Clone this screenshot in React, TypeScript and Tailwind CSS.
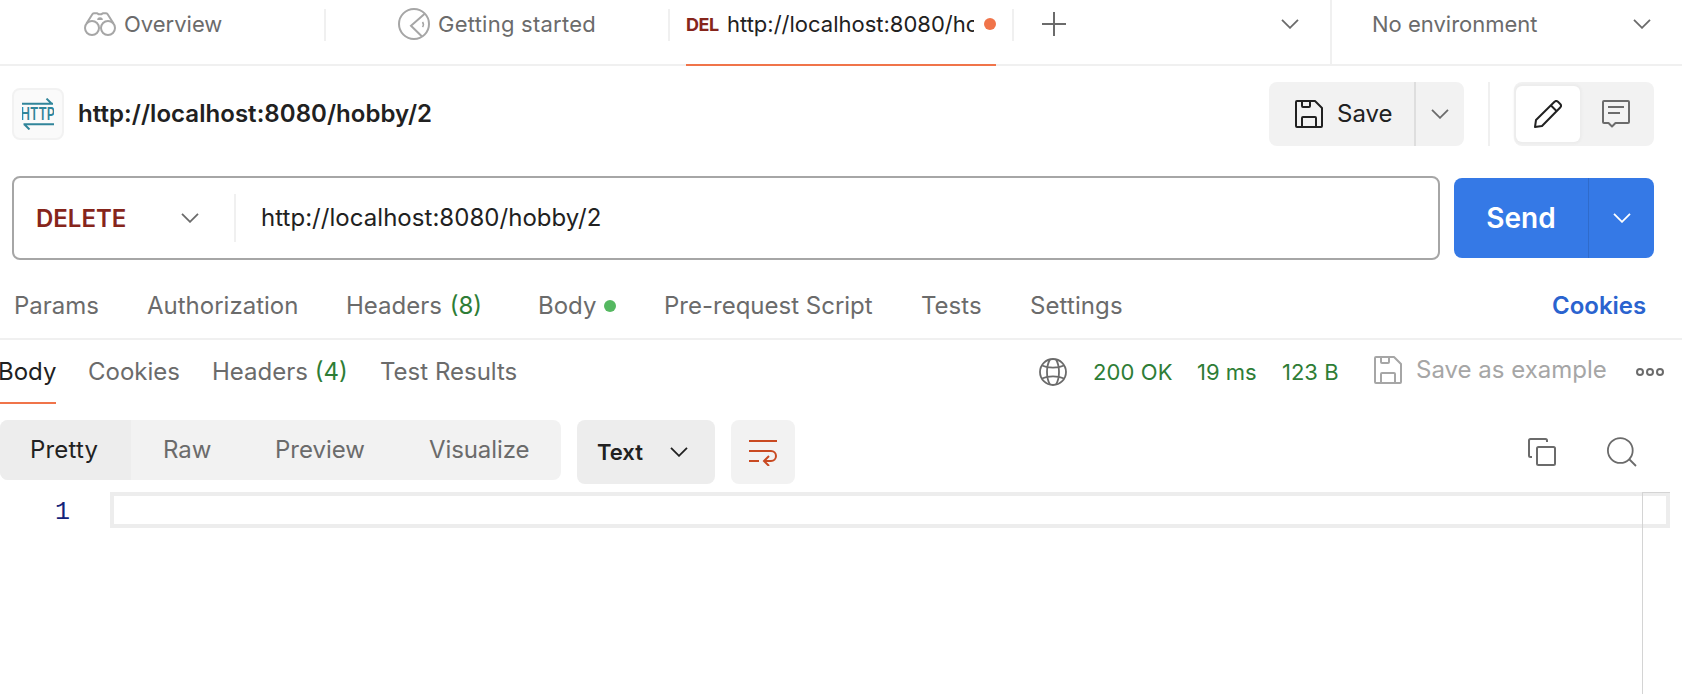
import type { ReactNode } from "react";

type IconProps = { className?: string };

function Chevron({ className = "" }: IconProps) {
  return (
    <svg className={`shrink-0 ${className}`} width="18" height="10" viewBox="0 0 18 10" fill="none" stroke="currentColor" strokeWidth="1.8">
      <path d="M1 .8 9 8.8l8-8" />
    </svg>
  );
}

function Binoculars() {
  return (
    <svg width="32" height="24" viewBox="0 0 32 24" fill="none" stroke="#a6a6a6" strokeWidth="2" className="shrink-0">
      <circle cx="8" cy="16" r="7" />
      <circle cx="24" cy="16" r="7" />
      <path d="M2.500 11.500 8.500 2Q9.100 1.200 10.200 1.200H13l1.500 1h3l1.500-1h2.800q1.100 0 1.700.8L29.500 11.500" />
      <path d="M13.200 8a2.800 2.800 0 0 1 5.600 0z" fill="#a6a6a6" stroke="none" />
    </svg>
  );
}

function StartedIcon() {
  return (
    <svg width="32" height="32" viewBox="0 0 32 32" fill="none" stroke="#a6a6a6" strokeWidth="2" className="shrink-0">
      <circle cx="16" cy="16" r="15" />
      <path d="M27 5.500 13 17.800 24 28.500" />
      <path d="M24.500 14q1.800 2.500 0 5" strokeWidth="1.600" />
    </svg>
  );
}

function HttpIcon() {
  return (
    <svg width="32" height="32" viewBox="0 0 32 32" fill="none" stroke="#31859a" strokeWidth="2" className="shrink-0">
      <path d="M0 5.800h31M24.500 .6l5.200 5.200" />
      <path d="M32 26.200H1.500M7.500 31.500l-5.200-5.200" />
      <text x="-1.500" y="22.400" textLength="34.500" lengthAdjust="spacingAndGlyphs" fontSize="17.500" fontWeight="600" fill="#31859a" stroke="none" fontFamily="Inter, sans-serif">HTTP</text>
    </svg>
  );
}

function Floppy() {
  return (
    <svg width="28" height="28" viewBox="0 0 28 28" fill="none" stroke="currentColor" strokeWidth="2" strokeLinejoin="round" className="shrink-0">
      <path d="M2 1h18l7 7v18a1 1 0 0 1-1 1H2a1 1 0 0 1-1-1V2a1 1 0 0 1 1-1z" />
      <path d="M7 1v5a1 1 0 0 0 1 1h6a1 1 0 0 0 1-1V1M7 27v-9a1 1 0 0 1 1-1h12a1 1 0 0 1 1 1v9" />
    </svg>
  );
}

function Pencil() {
  return (
    <svg width="28" height="28" viewBox="0 0 28 28" fill="none" stroke="#212121" strokeWidth="2" strokeLinejoin="round" className="shrink-0">
      <path d="M1 27l1-7L20.500 1.800a2.500 2.500 0 0 1 3.500 0l2.200 2.200a2.500 2.500 0 0 1 0 3.500L8 26z" />
      <path d="M17 5.500 22.500 11" />
    </svg>
  );
}

function Comment() {
  return (
    <svg width="28" height="28" viewBox="0 0 28 28" fill="none" stroke="#6b6b6b" strokeWidth="2" strokeLinejoin="round" className="shrink-0">
      <path d="M2 1h24a1 1 0 0 1 1 1v20a1 1 0 0 1-1 1H13.500L10 26.500 6.500 23H2a1 1 0 0 1-1-1V2a1 1 0 0 1 1-1zM6 7h16M6 13h12" />
    </svg>
  );
}

function Globe() {
  return (
    <svg width="28" height="28" viewBox="0 0 28 28" fill="none" stroke="#6b6b6b" strokeWidth="1.800" className="shrink-0">
      <circle cx="14" cy="14" r="13" />
      <path d="M11 1.500C7 8 7 20 11 26.500M17 1.500c4 6.500 4 18.500 0 25M3 7.500c6 2.800 16 2.800 22 0M3 20.500c6-2.800 16-2.800 22 0" />
    </svg>
  );
}

function Wrap() {
  return (
    <svg width="28" height="28" viewBox="0 0 28 28" fill="none" stroke="#c94a22" strokeWidth="2" className="shrink-0">
      <path d="M0 3h28M0 13h22a5 5 0 0 1 0 10h-6.500M0 23h10M20 18l-5 5 5 5" />
    </svg>
  );
}

function Copy() {
  return (
    <svg width="28" height="28" viewBox="0 0 28 28" fill="none" stroke="#6b6b6b" strokeWidth="2" className="shrink-0">
      <rect x="9" y="9" width="18" height="18" rx="1.500" />
      <path d="M4 19H2.500A1.500 1.500 0 0 1 1 17.500v-15A1.500 1.500 0 0 1 2.500 1h15A1.500 1.500 0 0 1 19 2.500V4" />
    </svg>
  );
}

function Search() {
  return (
    <svg width="30" height="30" viewBox="0 0 30 30" fill="none" stroke="#6b6b6b" strokeWidth="1.800" className="shrink-0">
      <circle cx="13.300" cy="13.500" r="12.400" />
      <path d="m22 22 7 7" />
    </svg>
  );
}

function More() {
  return (
    <svg width="28" height="10" viewBox="0 0 28 10" fill="none" stroke="#6b6b6b" strokeWidth="2" className="shrink-0">
      <circle cx="4" cy="5" r="3" />
      <circle cx="14" cy="5" r="3" />
      <circle cx="24" cy="5" r="3" />
    </svg>
  );
}

function Divider({ className = "" }: IconProps) {
  return <div className={`w-[2px] shrink-0 bg-[#f0f0f0] ${className}`} />;
}

function Slot({ className, children }: { className: string; children: ReactNode }) {
  return <div className={`shrink-0 ${className}`}>{children}</div>;
}

function TabBar() {
  return (
    <div className="flex h-[66px] shrink-0 border-b-2 border-[#f0f0f0] text-[22px]">
      <div className="flex h-12 w-[324px] items-center gap-2 pl-[84px]">
        <Binoculars />
        <span>Overview</span>
      </div>
      <Divider className="mt-[9px] h-8" />
      <div className="flex h-12 w-[342px] items-center gap-2 pl-[72px]">
        <StartedIcon />
        <span className="tracking-[0.25px]">Getting started</span>
      </div>
      <Divider className="mt-[9px] h-8" />
      <div className="ml-4 flex h-[66px] w-[310px] shrink-0 items-center border-b-2 border-[#f0744a] pb-4">
        <span className="w-[41px] shrink-0 pt-px text-[18px] font-bold tracking-[-0.5px] text-[#86251b]">DEL</span>
        <span className="w-[247px] shrink-0 overflow-hidden text-[#212121]">http://localhost:8080/hobby/2</span>
        <span className="ml-[10px] size-3 shrink-0 rounded-full bg-[#f0744a]" />
      </div>
      <Divider className="mt-[9px] ml-4 h-8" />
      <div className="flex h-12 flex-1 items-center justify-between pr-[31px] pl-7">
        <svg width="24" height="24" viewBox="0 0 24 24" stroke="#6b6b6b" strokeWidth="2">
          <path d="M12 0v24M0 12h24" />
        </svg>
        <Chevron />
      </div>
      <Divider className="h-16" />
      <div className="flex h-12 w-[350px] items-center justify-between pr-[31px] pl-10">
        <span>No environment</span>
        <Chevron />
      </div>
    </div>
  );
}

function RequestHeader() {
  return (
    <div className="mt-4 flex h-16 shrink-0 items-center pr-7 pl-3 text-[#212121]">
      <div className="flex size-[52px] items-center justify-center rounded-lg border-2 border-[#f2f2f2] bg-[#fafafa]">
        <HttpIcon />
      </div>
      <h1 className="ml-[14px] flex-1 font-semibold tracking-[0.05px]">http://localhost:8080/hobby/2</h1>
      <div className="flex h-16 w-[195px] rounded-lg bg-[#f2f2f2]">
        <button className="flex w-[147px] items-center gap-[14px] border-r-2 border-[#dedede] pl-[26px]">
          <Floppy />
          <span>Save</span>
        </button>
        <button className="flex flex-1 items-center justify-center text-[#6b6b6b]">
          <Chevron />
        </button>
      </div>
      <Divider className="ml-6 h-16" />
      <div className="ml-6 flex h-16 w-[140px] items-center rounded-lg bg-[#f2f2f2] px-[2px]">
        <div className="flex h-14 w-16 items-center justify-center rounded-md bg-white shadow-[0_0_2px_2px_#ececec]">
          <Pencil />
        </div>
        <div className="flex flex-1 items-center justify-center">
          <Comment />
        </div>
      </div>
    </div>
  );
}

function UrlBar() {
  return (
    <div className="mt-[30px] flex h-[84px] shrink-0 items-center pr-7 pl-3">
      <div className="flex h-[84px] w-[1428px] items-center rounded-lg border-2 border-[#a6a6a6] text-[#212121]">
        <span className="w-[145px] pt-[2px] pl-[22px] font-semibold text-[#86251b]">DELETE</span>
        <Chevron className="ml-[22px] text-[#6b6b6b]" />
        <Divider className="ml-[35px] h-12" />
        <span className="ml-[25px] tracking-[0.04px]">http://localhost:8080/hobby/2</span>
      </div>
      <div className="ml-[14px] flex h-20 w-[200px] rounded-lg bg-[#3579e6] text-white">
        <button className="flex w-[135px] items-center justify-center border-r border-[#2f6bcb] text-[28px] font-semibold">Send</button>
        <button className="flex flex-1 items-center justify-center">
          <Chevron />
        </button>
      </div>
    </div>
  );
}

function RequestTabs() {
  return (
    <div className="flex h-20 shrink-0 items-center border-b-2 border-[#f0f0f0] pt-[14px] pl-[14px]">
      <Slot className="w-[133px]">Params</Slot>
      <Slot className="w-[199px]">Authorization</Slot>
      <Slot className="w-[192px]">
        Headers <span className="ml-px text-[#2e7d36]">(8)</span>
      </Slot>
      <Slot className="flex w-[126px] items-center">
        <span className="w-[66px]">Body</span>
        <span className="size-3 rounded-full bg-[#55b861]" />
      </Slot>
      <Slot className="w-[257px]">Pre-request Script</Slot>
      <Slot className="w-[109px]">Tests</Slot>
      <Slot className="w-[522px] tracking-[0.1px]">Settings</Slot>
      <span className="font-semibold text-[#2a63cf]">Cookies</span>
    </div>
  );
}

function ResponseTabs() {
  return (
    <div className="flex h-16 shrink-0 items-center">
      <Slot className="flex h-16 w-14 items-center border-b-2 border-[#f0744a] pt-[2px] text-[#212121]">
        <span className="-ml-[2px]">Body</span>
      </Slot>
      <Slot className="ml-8 w-[124px]">Cookies</Slot>
      <Slot className="w-[168px]">
        Headers <span className="text-[#2e7d36]">(4)</span>
      </Slot>
      <Slot className="w-[659px]">Test Results</Slot>
      <Globe />
      <div className="flex w-[307px] shrink-0 pl-[26px] text-[22px] text-[#2e7d36]">
        <span className="w-[104px] tracking-[0.1px]">200 OK</span>
        <span className="w-[85px]">19 ms</span>
        <span>123 B</span>
      </div>
      <div className="-mt-1 flex items-center gap-[14px] text-[#a6a6a6]">
        <Floppy />
        <span className="w-[220px]">Save as example</span>
      </div>
      <More />
    </div>
  );
}

function BodyToolbar() {
  return (
    <div className="mt-4 flex h-16 shrink-0 items-start">
      <div className="flex h-[60px] w-[561px] items-center overflow-hidden rounded-lg bg-[#f2f2f2]">
        <span className="flex h-full w-[131px] items-center bg-[#ededed] pl-[30px] tracking-[0.2px] text-[#212121]">Pretty</span>
        <span className="w-[113px] pl-8">Raw</span>
        <span className="w-[154px] pl-[31px]">Preview</span>
        <span className="pl-[31px] tracking-[-0.1px]">Visualize</span>
      </div>
      <button className="ml-4 flex h-16 w-[138px] items-center justify-between rounded-lg bg-[#ededed] pr-[27px] pl-5 text-[22px] font-semibold text-[#212121]">
        Text
        <Chevron />
      </button>
      <div className="ml-4 flex size-16 items-center justify-center rounded-lg bg-[#f2f2f2]">
        <Wrap />
      </div>
      <div className="flex h-16 flex-1 items-center justify-end gap-[51px] pr-[45px]">
        <Copy />
        <Search />
      </div>
    </div>
  );
}

function Editor() {
  return (
    <div className="relative mt-2 flex flex-1">
      <div className="h-9 w-[110px] pt-[3px] pl-[55px] font-['Liberation_Mono',monospace] text-[25px] leading-9 text-[#14237a]">1</div>
      <div className="h-9 w-[1560px] border-4 border-[#ededed]" />
      <div className="absolute top-0 right-3 bottom-0 w-7 border-t border-l border-[#d4d4d4]" />
    </div>
  );
}

export default function App() {
  return (
    <div className="flex h-[694px] w-[1682px] flex-col overflow-hidden bg-white font-[Inter,sans-serif] text-[24px] leading-8 whitespace-nowrap text-[#6b6b6b]">
      <TabBar />
      <RequestHeader />
      <UrlBar />
      <RequestTabs />
      <ResponseTabs />
      <BodyToolbar />
      <Editor />
    </div>
  );
}
